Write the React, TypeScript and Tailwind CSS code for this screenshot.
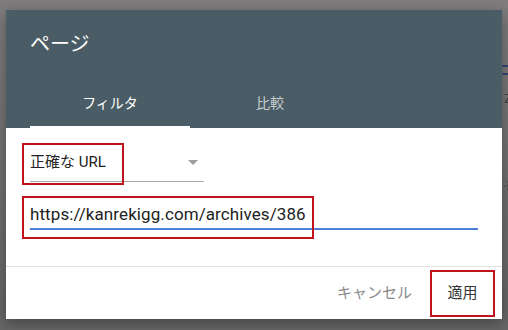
import React from 'react';

const font = { fontFamily: 'Roboto, "Noto Sans CJK JP", sans-serif' };

export default function App() {
  return (
    <div
      className="relative w-[508px] h-[330px] overflow-hidden bg-linear-to-b from-[#7f7d7d] to-[#666666] pt-[10px] pl-[6px]"
      style={font}
    >
      {/* page behind the overlay, only its right edge shows */}
      <div className="absolute right-0 top-[65px] w-[6px] h-[2px] bg-[#2f3f6a]" />
      <div className="absolute right-0 top-[73px] w-[6px] h-[2px] bg-[#2f3f6a]" />
      <div className="absolute left-[504px] top-[89px] text-[13px] text-[#3a3a3a]">Z</div>
      <div className="absolute left-[503px] top-[177px] text-[13px] text-[#4a4a4a]">ぞ</div>

      {/* dialog */}
      <div className="w-[496px] h-[309px] bg-white flex flex-col shadow-[0_4px_14px_rgba(0,0,0,0.35)]">
        <header className="h-[118px] bg-[#4a5c65] flex flex-col justify-between pt-[19px] pl-[24px]">
          <h1 className="text-[20px] leading-[30px] text-white font-normal">ページ</h1>
          <div className="flex">
            <div className="w-[160px] h-[48px] flex flex-col">
              <div className="flex-1 flex items-center justify-center text-[14px] text-white">フィルタ</div>
              <div className="h-[2px] bg-white" />
            </div>
            <div className="w-[160px] h-[48px] flex items-center justify-center text-[14px] text-white/70 pb-[2px]">
              比較
            </div>
          </div>
        </header>

        <div className="flex-1 flex flex-col pt-[17px] px-[24px]">
          {/* select */}
          <div className="relative w-[174px] h-[37px] flex items-center justify-between border-b border-[#a8a8a8] pb-[1px]">
            <span className="text-[15px] text-[#222222]">正確な URL</span>
            <svg width="10" height="5" viewBox="0 0 10 5" className="mr-[6px] mb-[1px]">
              <path d="M0 0h10L5 5z" fill="#9e9e9e" />
            </svg>
            <div className="absolute -left-[8px] -top-[2px] w-[102px] h-[42px] border-2 border-[#c0141c]" />
          </div>

          {/* url input */}
          <div className="relative mt-[19px] w-[448px] h-[29px] flex items-center border-b-2 border-[#4a80d8]">
            <span className="text-[17px] text-[#222222] leading-none tracking-[0.09px]">https://kanrekigg.com/archives/386</span>
            <div className="absolute -left-[8px] -top-[5px] w-[292px] h-[43px] border-2 border-[#c0141c]" />
          </div>
        </div>

        {/* footer */}
        <footer className="h-[53px] border-t border-[#e2e2e2] flex items-center justify-end pr-[7px]">
          <button className="h-[36px] px-[8px] text-[15px] text-[#8a8a8a] mr-[10px]">キャンセル</button>
          <div className="relative w-[65px] h-[47px] flex items-center justify-center">
            <span className="text-[15px] text-[#333333]">適用</span>
            <div className="absolute inset-0 border-2 border-[#c0141c]" />
          </div>
        </footer>
      </div>
    </div>
  );
}
